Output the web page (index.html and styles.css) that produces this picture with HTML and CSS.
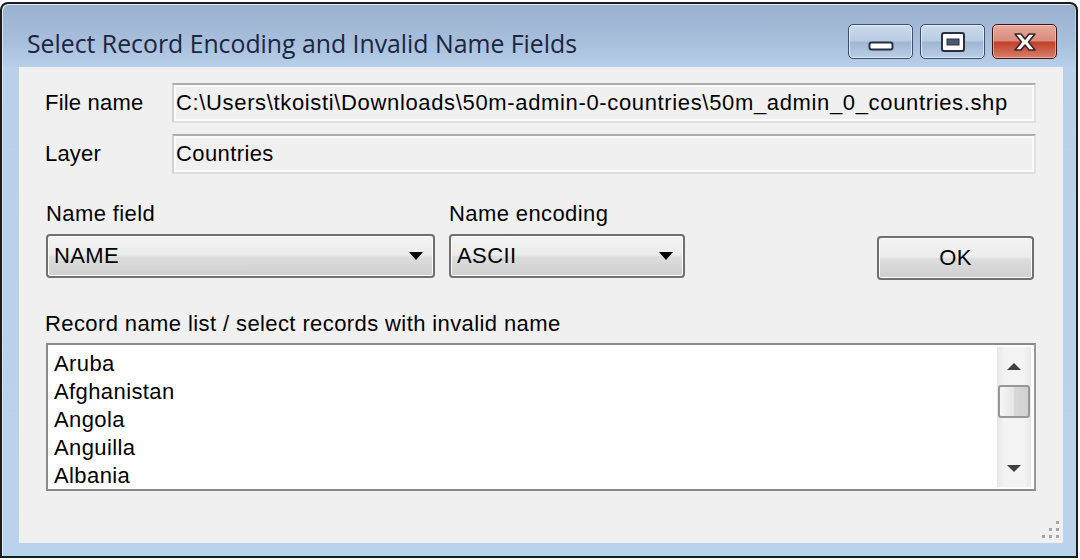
FILE: index.html
```html
<!DOCTYPE html>
<html lang="en">
<head>
  <meta charset="UTF-8">
  <title>Select Record Encoding and Invalid Name Fields</title>
  <link rel="stylesheet" href="styles.css">
</head>
<body>
  <div class="window">
    <div class="titlebar">
      <span class="title">Select Record Encoding and Invalid Name Fields</span>
      <div class="caption-buttons">
        <button class="cap-btn min" title="Minimize">
          <svg width="26" height="12" viewBox="0 0 26 12"><rect x="1.5" y="2.5" width="23" height="7" rx="2" fill="#fff" stroke="#2b3040" stroke-width="2"/></svg>
        </button>
        <button class="cap-btn" title="Maximize">
          <svg width="26" height="22" viewBox="0 0 26 22"><rect x="2" y="2" width="22" height="18" rx="2" fill="#fff" stroke="#2b3040" stroke-width="2"/><rect x="7" y="8" width="12" height="6" fill="#4a5670" stroke="#2b3040" stroke-width="1"/></svg>
        </button>
        <button class="cap-btn close" title="Close">
          <svg width="30" height="22" viewBox="0 0 30 22"><path d="M5 3 L11 3 L15 8 L19 3 L25 3 L18.5 11 L25 19 L19 19 L15 14 L11 19 L5 19 L11.5 11 Z" fill="#fff" stroke="#3a2428" stroke-width="1.6" stroke-linejoin="round"/></svg>
        </button>
      </div>
    </div>

    <div class="client">
      <div class="field-row">
        <label class="field-label">File name</label>
        <div class="readonly-box path">C:\Users\tkoisti\Downloads\50m-admin-0-countries\50m_admin_0_countries.shp</div>
      </div>
      <div class="field-row layer-row">
        <label class="field-label">Layer</label>
        <div class="readonly-box">Countries</div>
      </div>

      <div class="combo-row">
        <div class="combo-group name-field">
          <label class="small-label">Name field</label>
          <div class="combo"><span>NAME</span><span class="arrow"></span></div>
        </div>
        <div class="combo-group name-encoding">
          <label class="small-label">Name encoding</label>
          <div class="combo"><span>ASCII</span><span class="arrow"></span></div>
        </div>
        <button class="ok-btn">OK</button>
      </div>

      <label class="small-label list-label">Record name list / select records with invalid name</label>
      <div class="listbox">
        <ul class="items">
          <li>Aruba</li>
          <li>Afghanistan</li>
          <li>Angola</li>
          <li>Anguilla</li>
          <li>Albania</li>
        </ul>
        <div class="scrollbar">
          <div class="sb-arrow"><span class="tri up"></span></div>
          <div class="sb-thumb"></div>
          <div class="sb-track"></div>
          <div class="sb-arrow"><span class="tri down"></span></div>
        </div>
      </div>

      <div class="grip">
        <i style="grid-area: 1 / 3"></i>
        <i style="grid-area: 2 / 2"></i><i style="grid-area: 2 / 3"></i>
        <i style="grid-area: 3 / 1"></i><i style="grid-area: 3 / 2"></i><i style="grid-area: 3 / 3"></i>
      </div>
    </div>
  </div>
</body>
</html>
```

FILE: styles.css
```css
html, body {
  margin: 0;
  padding: 0;
  background: #ffffff;
}
body {
  width: 1080px;
  height: 560px;
  overflow: hidden;
  font-family: "Liberation Sans", Arial, sans-serif;
  letter-spacing: 0.4px;
}
.window {
  box-sizing: border-box;
  width: 1078px;
  height: 556px;
  margin-top: 2px;
  border: 2px solid #1c1c1c;
  border-radius: 8px 8px 0 0;
  background: linear-gradient(#99b1ce, #a8c0dc 40px, #b9d0ea 64px, #bbd2ec);
  box-shadow: inset 1px 1px 0 #dfe9f5, inset -1px -1px 0 #9ee0f0;
  padding: 0 13px 13px 17px;
  display: flex;
  flex-direction: column;
}
.titlebar {
  height: 63px;
  display: flex;
  align-items: flex-start;
}
.title {
  font-family: "Open Sans", "Noto Sans", sans-serif;
  font-size: 24.8px;
  letter-spacing: 0;
  color: #1c2541;
  margin: 24px 0 0 8px;
  line-height: 30px;
}
.caption-buttons {
  margin: 20px 6px 0 auto;
  display: flex;
  gap: 7px;
}
.cap-btn {
  width: 65px;
  height: 35px;
  padding: 0;
  border: 1px solid #3d4f6e;
  border-radius: 5px;
  background: linear-gradient(#cddbec, #b7cbe3 48%, #9fb7d4 52%, #b9cde6);
  box-shadow: inset 0 0 0 1px rgba(255,255,255,0.55);
  display: flex;
  align-items: center;
  justify-content: center;
}
.cap-btn.min svg {
  margin-top: 8px;
}
.cap-btn.close {
  border-color: #3f1517;
  background: linear-gradient(#e8aa9c, #d98b7c 48%, #c23f28 52%, #d8806a);
  box-shadow: inset 0 0 0 1px rgba(255,220,210,0.5);
}
.client {
  position: relative;
  flex: 1;
  background: #f0f0f0;
  padding: 16px 27px 0 26px;
}
.field-row {
  display: flex;
  align-items: center;
  height: 40px;
}
.layer-row {
  margin-top: 11px;
}
.field-label {
  width: 127px;
  font-size: 22px;
  letter-spacing: 0.2px;
  color: #000;
}
.readonly-box {
  box-sizing: border-box;
  flex: 1;
  height: 40px;
  border: 2px solid #e0e0e0;
  border-top-color: #acacac;
  border-left-color: #d2d2d2;
  box-shadow: inset 0 0 0 2px #fafafa;
  background: #f0f0f0;
  font-size: 22px;
  line-height: 36px;
  padding-left: 2px;
  white-space: nowrap;
  overflow: hidden;
}
.readonly-box.path {
  letter-spacing: 0.65px;
}
.combo-row {
  display: flex;
  align-items: flex-end;
  margin-top: 28px;
  padding-left: 1px;
}
.combo-group {
  display: flex;
  flex-direction: column;
}
.name-field { width: 389px; }
.name-encoding { width: 236px; margin-left: 14px; }
.small-label {
  display: block;
  font-size: 22px;
  line-height: 24px;
  color: #000;
  margin-bottom: 8px;
}
.combo {
  box-sizing: border-box;
  height: 44px;
  border: 2px solid #707070;
  border-radius: 4px;
  background: linear-gradient(#f4f4f4, #ebebeb 48%, #dddddd 52%, #cfcfcf);
  box-shadow: inset 0 0 0 1px #fcfcfc;
  display: flex;
  align-items: center;
  justify-content: space-between;
  padding: 0 10px 0 6px;
  font-size: 22px;
}
.arrow {
  width: 0;
  height: 0;
  border-left: 7px solid transparent;
  border-right: 7px solid transparent;
  border-top: 8px solid #000;
}
.ok-btn {
  box-sizing: border-box;
  width: 157px;
  height: 44px;
  margin: 0 2px -2px auto;
  border: 2px solid #707070;
  border-radius: 4px;
  background: linear-gradient(#f4f4f4, #ebebeb 48%, #dddddd 52%, #cfcfcf);
  box-shadow: inset 0 0 0 1px #fcfcfc;
  font-family: "Liberation Sans", Arial, sans-serif;
  font-size: 22px;
  letter-spacing: 0.4px;
  color: #000;
  padding: 0;
}
.list-label {
  margin: 34px 0 7px 0;
}
.listbox {
  box-sizing: border-box;
  height: 148px;
  margin-left: 1px;
  border: 2px solid #8a8a8a;
  border-right-color: #9a9a9a;
  background: #fff;
  display: flex;
}
.items {
  flex: 1;
  list-style: none;
  margin: 0;
  padding: 5px 0 0 6px;
  font-size: 22px;
  line-height: 28px;
}
.scrollbar {
  width: 34px;
  margin: 2px 3px 2px 0;
  background: linear-gradient(90deg, #e6e6e6, #f3f3f3 20%, #f3f3f3 80%, #e9e9e9);
  display: flex;
  flex-direction: column;
}
.sb-arrow {
  height: 38px;
  display: flex;
  align-items: center;
  justify-content: center;
}
.tri {
  width: 0;
  height: 0;
  border-left: 7px solid transparent;
  border-right: 7px solid transparent;
}
.tri.up { border-bottom: 7px solid #3f3f3f; }
.tri.down { border-top: 7px solid #3f3f3f; }
.sb-thumb {
  box-sizing: border-box;
  height: 33px;
  margin: 0 1px;
  border: 2px solid #979797;
  border-radius: 3px;
  background: linear-gradient(90deg, #f6f6f6, #e6e6e6 48%, #d6d6d6 52%, #d2d2d2);
}
.sb-track {
  flex: 1;
}
.grip {
  position: absolute;
  right: 4px;
  bottom: 5px;
  display: grid;
  grid-template-columns: repeat(3, 3px);
  grid-template-rows: repeat(3, 3px);
  gap: 4px;
}
.grip i {
  background: #a6a6a6;
  box-shadow: 1px 1px 0 #ffffff;
}
```
